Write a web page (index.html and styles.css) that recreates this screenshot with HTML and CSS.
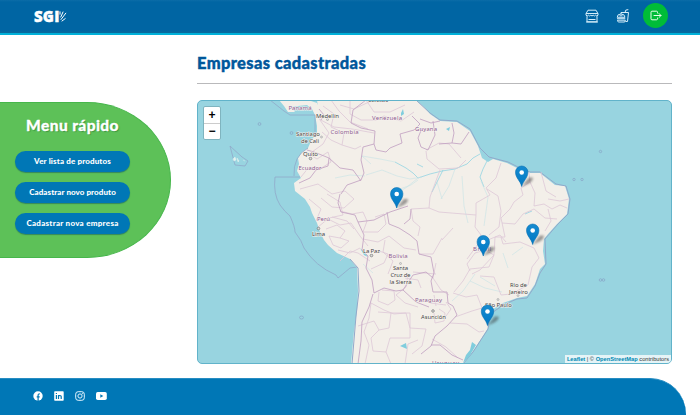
FILE: index.html
```html
<!DOCTYPE html>
<html lang="pt-BR">
<head>
<meta charset="utf-8">
<title>SGI</title>
<link rel="stylesheet" href="styles.css">
</head>
<body>
<header class="topbar">
  <div class="logo">SGI<svg width="9" height="12" viewBox="0 0 9 12" fill="none" stroke="#fff" stroke-linecap="round"><path d="M1 4.200V1.800M1.800 7L4 2M2 9.500L6.800 3.200M3 11L6.200 8.600" stroke-width="1"/></svg></div>
  <nav class="actions">
    <svg class="shop" width="14" height="14" viewBox="0 0 14 14" fill="none" stroke="#d5edf9"><path d="M3 1.200h8l2 3.500v1.500q-1.200 1.500-2.400 0-1.200 1.500-2.400 0-1.200 1.500-2.400 0-1.200 1.500-2.400 0-1.200 1.500-2.400 0V4.700zM1 4.500h12M2 7.200v5.600h10V7.200M3.500 10.500h7M1 13h12"/></svg>
    <svg class="food" width="14" height="14" viewBox="0 0 14 14" fill="none" stroke="#d5edf9"><path d="M5 5V3.500h7.500l-1 9H9.500M9 3.500l.8-2.400 2.500-.5M1.200 8.300Q1.200 5 5 5t4 3.300zM1 9.700h8.300M1.500 11.200h7.800v.8q0 1-1.300 1H2.800q-1.300 0-1.300-1.800zM3.500 6.800h3"/></svg>
    <a class="logout"><svg width="12" height="12" viewBox="0 0 12 12" fill="none" stroke="#e7ffe9" stroke-linejoin="round" stroke-linecap="round"><path d="M7.500 3V2.200q0-1-1-1H2q-1 0-1 1v6.600q0 1 1 1h4.500q1 0 1-1V8M4 5.500h7M9 3.500l2 2-2 2"/></svg></a>
  </nav>
</header>
<div class="page">
  <aside class="quick">
    <h2>Menu rápido</h2>
    <a class="pill p1">Ver lista de produtos</a>
    <a class="pill p2">Cadastrar novo produto</a>
    <a class="pill p3">Cadastrar nova empresa</a>
  </aside>
  <main class="content">
    <h1>Empresas cadastradas</h1>
    <section class="map">
      <svg class="tiles" viewBox="198 100 473 262" width="473" height="262">
        <defs>
          <linearGradient id="pinfill" x2="0" y2="1"><stop stop-color="#168bd0"/><stop offset="1" stop-color="#0078c4"/></linearGradient>
          <filter id="soft" x="-50%" y="-50%" width="200%" height="200%"><feGaussianBlur stdDeviation="1.200"/></filter>
          <g id="pin">
            <path d="M0 0L7-9L11-9Q12-6 7-3Z" fill="#333" opacity=".45" filter="url(#soft)"/>
            <path d="M0 0C-1.500-6-6.200-8.500-6.200-14.300A6.200 6.200 0 0 1 6.200-14.300C6.200-8.500 1.500-6 0 0Z" fill="url(#pinfill)" stroke="#0870b2" stroke-width=".6"/>
            <circle cy="-14" r="2.300" fill="#fff"/>
          </g>
        </defs>
        <path class="land" d="M317 99L318 106L315 114L317 125L317 132L311 140L308 147L302 151L298 157L299 163L297 170L301 177L294 182L295 190L305 198L310 206L312 212L317 222L320 231L324 239L328 244L337 252L350 258L357 267L358 290L357 310L354 330L351 363H463L473 350L481 338L488 327L487 317L490 310L503 302L517 297L527 295L535 283L540 268L545 263L543 250L544 238L548 233L557 223L567 213L569 198L565 185L555 184L540 172L530 172L517 167L507 162L493 158L488 161L482 157L478 145L470 130L457 121L440 120L430 113L424 106L416 99Z"/>
        <path class="land" d="M279 99L284 105L288 111L295 111L291 106L298 105L307 104L312 108L315 114L320 108L317 102L308 99Z"/>
        <path class="coast" d="M416 99L430 112L440 119L457 120L470 128L480 147L489 156L508 161L518 166L530 171L540 171L556 183L566 185L570 198L568 213L558 223L545 238L546 263L540 272L535 285L527 297L517 298L505 303L490 313L488 328L473 351L463 363M350 258L358 267L359 290L356 315L352 363"/>
        <path class="sea" d="M270 99L284 110L290 114H315V132M308 147Q293 155 294 175M300 176H275Q273 193 280 204Q285 211 290 215Q295 226 295 231Q302 240 304 247Q315 265 336 274L338 277L350 267L357 266M230 145L242 156L248 160L245 165L235 164Z"/>
        <path class="lagoon" d="M463 362L466 354L470 349L472 341L476 344L469 356ZM400 345L406 342L407 348ZM360 247L364 251L368 256L364 254ZM401 112l2-4 1 5-3 2zM446 128l4-2-1 4z"/>
        <path class="reef" d="M233 158l2-2 1 3-2 1zM237 157l2 3-1 1zM243 159l2 1"/>
        <g class="river">
          <path d="M395 161L406 167L413 172L418 177L430 173L442 170L455 168L467 163L473 157L480 153M443 169L437 181L432 191M488 158L483 168L480 176L484 186M417 163L423 166M525 213L532 210"/>
          <path class="thin" d="M371 163L362 155L380 158L395 161M366 174L382 169L397 175L410 178L422 176M418 177L407 186L396 193M462 175L464 205L468 222M335 177L350 174L365 175M400 188L411 184L418 179M437 181L442 198M481 180L488 196L484 225M455 168L449 185L441 198M475 273L463 290L452 300M470 280L485 287L502 291M363 263L373 272M480 276L495 285M503 252L508 267M523 246L512 254"/>
        </g>
        <g class="states">
          <path d="M340 104L354 108L369 101M323 105L334 113L331 126L344 132L342 144L355 148L361 145M322 131L331 139L342 144M319 118L334 126L352 128L374 132M350 99L350 113L361 119L376 119L384 115L401 120L414 111M366 99L374 111L390 111L405 104M331 99L339 110L350 121L368 128M320 119L329 132L323 143L312 151M306 151L317 158L328 151L331 161L320 168L309 166L301 176"/>
          <path d="M300 188L318 183L332 193L345 190L354 198L344 207L332 206L321 197M309 198L321 208L316 220M327 193L340 201L343 214L329 217L318 226M326 228L337 224L345 230L340 237L329 235L333 244L341 247L349 240L340 237M338 249L350 252L360 247M332 216L347 220L354 228"/>
          <path d="M426 150L427 158L439 168L458 167L466 159M426 149L439 142L449 143L461 157M440 169L430 196L429 207L439 211L476 214M411 208L429 207M411 208L413 220L420 226L418 235M476 214L475 226L481 234L478 242M501 162L496 177L486 187L490 194L476 202L476 214M487 188L498 195L501 210L499 226L489 234"/>
          <path d="M501 217L510 208L514 201L523 194L521 187L530 181L529 171M530 181L535 192L534 205L544 203L552 208L560 204L567 207M541 171L546 190L556 196M548 198L560 200L569 198M548 208L551 220L545 230M501 217L505 236L495 236L494 254L480 269L472 273M534 208L523 213L515 223L502 222M534 208L545 217L557 218M494 254L489 266L470 268L463 280L454 291"/>
          <path d="M501 236L503 243L520 241L534 247L539 257L532 266L528 284L517 290M480 275L494 276L501 294L511 293M494 254L485 249L475 252L467 263L470 270M506 241L500 234L478 243L467 258M453 292L466 296L477 294L482 307L472 310L455 316M450 322L467 323L479 331L484 330M436 262L433 277L441 289L449 294M432 338L446 346L458 357M419 253L433 253L442 237M453 227L442 239"/>
          <path d="M340 210L352 213L363 211L367 220L363 231L378 231L386 223L384 213L375 216M328 218L340 224L351 222L360 235L368 245M340 260L350 250L358 252L370 260M363 238L378 241L389 235L404 247L416 249M379 250L388 253L384 262L371 268M385 239L383 251L393 260L388 273M408 273L406 286L396 294L405 302L418 306M405 277L418 279L421 287M413 271L436 273"/>
          <path d="M382 289L394 290L395 299L388 304L378 300L379 291M371 302L384 309L394 313L406 312L410 327M371 302L369 317L364 331L369 344L365 363M358 325L374 320L379 329L371 337L373 350L386 351L391 363M378 311L391 312L389 327L379 329M391 312H410V337H390L386 351M410 327L426 328L422 345L412 353M405 363L408 343L418 339M439 308L445 312L444 320L435 322L434 312M446 301L451 308L446 315M430 302L446 304M434 294L436 305"/>
        </g>
        <path class="borders" d="M319 108L324 114L321 119M366 99L353 109L351 122L361 127L375 130L374 143L376 149L386 151L390 147L402 142L400 133L414 129L420 123L412 115M420 118L431 122L440 120M433 120L435 134L428 149L421 146L418 137L422 127M452 122L454 132L452 142L439 143M469 131L461 143L452 142M374 143L363 146L361 159L364 172L361 179L347 184L341 193M361 180L353 169L340 167L329 157L314 151L307 149M329 157L328 165L316 169L310 177L299 182M340 193L338 202L341 211L355 214L358 221L374 219L390 211L408 205M358 221L364 234L362 249L368 255L366 267L372 279L374 292L384 287L396 290L403 289L416 301L429 306M387 211L389 223L399 227L410 234L417 240L419 253L431 256L434 272L431 280L433 291L447 291L448 302L453 305L457 314L447 325L435 335L431 345L421 353M403 289L413 274L426 271L433 277M373 293L369 306L362 321L361 340L358 363M431 344L440 344L452 354L463 359M404 223L410 218L411 208"/>
        <g class="islands"><circle cx="259.500" cy="123" r="1.400"/><circle cx="291.500" cy="132" r="1.400"/><circle cx="600.500" cy="150.500" r="1.200"/><circle cx="574" cy="178.500" r="1.200"/><circle cx="582" cy="178.500" r="1.200"/><ellipse cx="301.500" cy="316.500" rx="2" ry="1.500"/><circle cx="600.500" cy="279" r="1.300"/><circle cx="603.500" cy="279" r="1.300"/></g>
        <g class="dots"><circle cx="310.500" cy="157.500" r="1.300"/><circle cx="318.500" cy="227.500" r="1.300"/><circle cx="371.500" cy="254.500" r="1.300"/><circle cx="433" cy="310" r="1.300"/><circle class="faint" cx="327.500" cy="118.500" r="1"/><circle class="faint" cx="321.500" cy="136" r="1"/><circle class="faint" cx="400.500" cy="262.500" r="1"/><circle class="faint" cx="518" cy="294.500" r="1"/><circle class="faint" cx="498" cy="298.500" r="1"/></g>
        <g class="country">
          <text x="288.500" y="108.500" textLength="23">Panamá</text>
          <text x="330.500" y="133" textLength="28">Colombia</text>
          <text x="372" y="118.500" textLength="30">Venezuela</text>
          <text x="415" y="130" textLength="22">Guyana</text>
          <text x="298.500" y="169" textLength="23">Ecuador</text>
          <text x="317" y="219.500" textLength="13">Perú</text>
          <text x="388.500" y="256.500" textLength="19">Bolivia</text>
          <text x="415" y="301" textLength="27">Paraguay</text>
          <text x="473" y="249.500" textLength="18">Brasil</text>
          <text x="432" y="364" textLength="27">Uruguay</text>
        </g>
        <g class="city">
          <text x="378" y="101" textLength="20">Caracas</text>
          <text x="327.500" y="117" textLength="23">Medellín</text>
          <text x="308" y="134.500" textLength="24">Santiago</text>
          <text x="310" y="141.500" textLength="18">de Cali</text>
          <text x="310.500" y="154.500" textLength="15">Quito</text>
          <text x="318.500" y="235" textLength="13">Lima</text>
          <text x="371.500" y="252" textLength="17">La Paz</text>
          <text x="400.500" y="269" textLength="15">Santa</text>
          <text x="400.500" y="276" textLength="20">Cruz de</text>
          <text x="400.500" y="283" textLength="22">la Sierra</text>
          <text x="433.500" y="318" textLength="25">Asunción</text>
          <text x="518.500" y="286" textLength="17">Rio de</text>
          <text x="518.500" y="293" textLength="19">Janeiro</text>
          <text x="498.500" y="305.500" textLength="27">São Paulo</text>
        </g>
        <use href="#pin" x="396.700" y="207"/>
        <use href="#pin" x="521.700" y="185.500"/>
        <use href="#pin" x="532.700" y="243.500"/>
        <use href="#pin" x="483.300" y="255"/>
        <use href="#pin" x="487.500" y="324.500"/>
      </svg>
      <div class="zoom"><span>+</span><span>−</span></div>
      <div class="credit"><b>Leaflet</b> | © <b>OpenStreetMap</b> contributors</div>
    </section>
  </main>
</div>
<footer class="footer">
  <svg width="10" height="10" viewBox="0 0 10 10"><circle cx="5" cy="5" r="4.700" fill="#fff"/><path d="M5.100 10V4.300q0-1.600 1.700-1.500M3.700 5.800h3" fill="none" stroke="#0077b6" stroke-width="1.200"/></svg>
  <svg width="10" height="10" viewBox="0 0 10 10"><rect width="9.500" height="9.500" x=".2" y=".2" rx=".8" fill="#fff"/><path d="M2.400 4v4M2.400 2v1.100M4.500 8V4M4.500 5.500q.2-1 1.400-1 1.300 0 1.300 1.300V8" fill="none" stroke="#0077b6" stroke-width="1.200"/></svg>
  <svg width="10" height="10" viewBox="0 0 10 10" fill="none" stroke="#e4f5ff"><rect x=".7" y=".7" width="8.600" height="8.600" rx="2.500"/><circle cx="5" cy="5" r="2.100"/><circle cx="7.500" cy="2.500" r=".3"/></svg>
  <svg width="11" height="10" viewBox="0 0 11 10"><rect y="1" width="10.800" height="8" rx="1.700" fill="#fff"/><path d="M4.300 3.200v3.600L7.300 5z" fill="#0077b6"/></svg>
</footer>
</body>
</html>
```
FILE: styles.css
```css
* { box-sizing: border-box; }
body {
  margin: 0;
  height: 415px;
  overflow: hidden;
  display: flex;
  flex-direction: column;
  background: #fff;
  font-family: Lato, "Open Sans", sans-serif;
}
.topbar {
  height: 35px;
  flex: none;
  display: flex;
  justify-content: space-between;
  padding: 0 32px 0 34px;
  background: linear-gradient(#0b6ca8 0, #0065a3 2px, #0065a3 30px, #0a6b9c 33px);
  border-bottom: 2px solid #00b0d8;
}
.logo {
  display: flex;
  align-items: center;
  height: 32px;
  color: #fff;
  font: 800 15px/32px "Open Sans", sans-serif;
  letter-spacing: .2px;
  -webkit-text-stroke: .4px #fff;
}
.logo svg { margin-left: -.5px; }
.actions { display: flex; align-items: flex-start; }
.shop, .food { margin-top: 9px; }
.shop { margin-right: 17px; }
.food { margin-right: 13px; }
.logout {
  width: 25px;
  height: 25px;
  margin-top: 3px;
  border-radius: 50%;
  background: #00bc38;
  display: flex;
  align-items: center;
  justify-content: center;
}
.page { height: 343px; flex: none; display: flex; align-items: flex-start; }
.quick {
  width: 171px;
  height: 156px;
  margin-top: 67px;
  padding: 13px 40px 0 15px;
  border: 1px solid #46b64b;
  border-left: 0;
  border-radius: 0 84px 84px 0 / 0 78px 78px 0;
  background: #5dc158;
  display: flex;
  flex-direction: column;
}
.quick h2 {
  margin: 0 0 16px;
  color: #fff;
  text-align: center;
  white-space: nowrap;
  font-size: 15.500px;
  line-height: 19px;
  font-weight: 900;
  letter-spacing: .4px;
  -webkit-text-stroke: .3px #fff;
  text-shadow: 1px 1px 1px #3b963f;
}
.pill {
  height: 21px;
  flex: none;
  margin-bottom: 10px;
  border-radius: 11px;
  background: #0077b6;
  box-shadow: 0 1px 1px #36885b;
  color: #fff;
  text-align: center;
  white-space: nowrap;
  font-size: 8px;
  line-height: 20px;
  font-weight: 900;
}
.p1 { letter-spacing: .15px; }
.p2 { letter-spacing: .08px; }
.p3 { letter-spacing: .28px; }
.content { width: 475px; margin: 17px 0 0 26px; }
h1 {
  height: 32px;
  margin: 0 0 16px;
  border-bottom: 1px solid #b9b9bb;
  color: #00579b;
  font-size: 16.500px;
  line-height: 22px;
  font-weight: 900;
  letter-spacing: .35px;
  -webkit-text-stroke: .4px #00579b;
}
.map {
  position: relative;
  height: 264px;
  overflow: hidden;
  border: 1px solid #61b3ca;
  border-radius: 5px;
  background: #98d4e0;
}
.tiles { display: block; }
.land { fill: #f3efe9; }
.coast, .sea, .borders, .states, .river, .islands { fill: none; stroke-linejoin: round; }
.coast { stroke: #91a9ca; stroke-width: 1; }
.sea { stroke: #91a8c9; stroke-width: .8; }
.islands { stroke: #86a4c6; stroke-width: .7; }
.borders { stroke: #c3a3c3; stroke-width: .85; }
.states { stroke: #ddc8d7; stroke-width: .8; }
.river { stroke: #93d4e2; stroke-width: .8; }
.thin { stroke: #c6e3e5; stroke-width: .6; }
.lagoon { fill: #80cddd; }
.reef { fill: #e3f2ef; stroke: #e3f2ef; stroke-width: .5; }
.dots { fill: #ddd; stroke: #777; stroke-width: .7; }
.faint { stroke: #aaa; }
.country, .city {
  font-family: "Noto Sans", sans-serif;
  font-size: 6px;
  paint-order: stroke;
  stroke: #f6f2ee;
  stroke-width: 1px;
}
.country { fill: #8d5b90; }
.city { fill: #444; }
.city text { text-anchor: middle; }
.zoom {
  position: absolute;
  left: 5px;
  top: 5px;
  width: 18px;
  height: 34px;
  border: 1px solid #7fb4bf;
  border-radius: 2px;
  background: #fff;
  display: flex;
  flex-direction: column;
}
.zoom span {
  height: 16px;
  text-align: center;
  font: bold 12px/16px "Liberation Sans", sans-serif;
}
.zoom span + span { border-top: 1px solid #ccc; line-height: 14px; }
.credit {
  position: absolute;
  right: 0;
  bottom: 0;
  padding: 0 2px;
  background: rgba(255, 255, 255, .75);
  color: #333;
  white-space: nowrap;
  font: 5.700px/8px "Liberation Sans", sans-serif;
}
.credit b { color: #0088b3; }
.footer {
  width: 686px;
  height: 37px;
  flex: none;
  padding: 13px 0 0 33px;
  display: flex;
  gap: 11px;
  border-top: 1px solid #278dc2;
  border-radius: 0 36px 0 0;
  background: #0077b6;
}
.footer svg { margin-top: -1px; }
```
